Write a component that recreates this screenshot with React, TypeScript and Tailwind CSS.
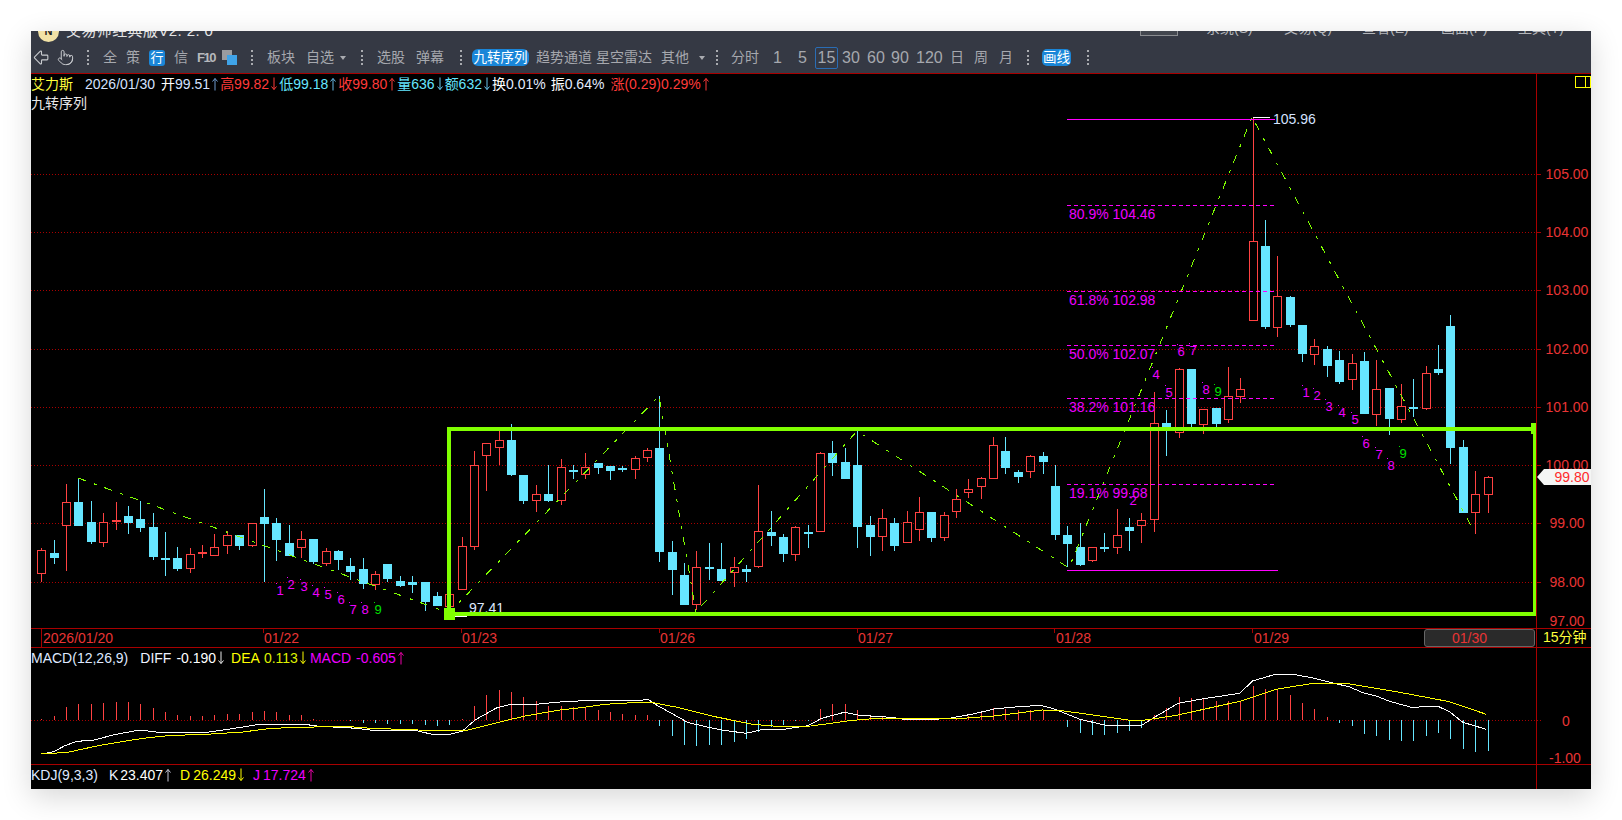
import React from 'react'
import { ArrowBigLeft, Pointer } from 'lucide-react'

const RED = '#ff4242'
const CYAN = '#66e6ff'
const GRID = '#a80000'
const AXIS = '#e83434'
const GREEN = '#80ff00'
const FIB = '#ee00ff'

type Row = number[]

// measured off the crops as [high, bodyTop, bodyBottom, low, isRed]
const scale = (oy: number, rows: Row[]) =>
    rows.map(([h, t, b, l, up]) => [oy + h / 3, oy + t / 3, oy + b / 3, oy + l / 3, up])

const candles: Row[] = [
    ...scale(420, [
        [384, 390, 458, 486, 1], [360, 399, 414, 432, 0], [192, 246, 314, 453, 1], [175, 245, 318, 318, 0],
        [243, 306, 366, 372, 0], [279, 306, 365, 381, 1], [246, 300, 302, 330, 1], [258, 288, 309, 342, 0],
        [243, 297, 324, 336, 0], [279, 321, 411, 420, 0], [336, 414, 416, 468, 0], [381, 414, 447, 453, 0],
        [384, 403, 446, 459, 1], [375, 397, 401, 414, 1], [342, 381, 405, 405, 1], [333, 346, 377, 402, 1],
        [345, 345, 378, 390, 0], [310, 310, 377, 381, 1], [207, 291, 312, 486, 0], [294, 309, 360, 423, 0],
        [315, 369, 408, 408, 0], [333, 358, 383, 414, 1], [357, 357, 426, 432, 0], [384, 393, 429, 438, 1],
        [390, 393, 420, 450, 0], [414, 438, 456, 480, 0], [414, 447, 492, 507, 0], [453, 463, 492, 510, 1],
        [432, 432, 477, 486, 0], [468, 483, 498, 501, 0], [468, 486, 495, 519, 0], [486, 486, 546, 573, 0],
        [516, 528, 558, 558, 0],
    ]),
    ...scale(380, [
        [642, 642, 678, 700, 1], [471, 499, 629, 629, 1], [213, 256, 500, 510, 1], [190, 190, 227, 333, 1],
        [153, 181, 203, 255, 1], [132, 180, 285, 288, 0], [285, 285, 363, 372, 0], [315, 343, 362, 396, 1],
        [255, 342, 363, 366, 0], [237, 262, 361, 375, 1], [255, 270, 274, 297, 0], [219, 262, 284, 297, 1],
        [249, 249, 264, 282, 0], [258, 258, 273, 300, 0], [258, 264, 267, 276, 0], [228, 235, 268, 297, 1],
        [205, 211, 233, 246, 1], [48, 204, 516, 546, 0], [483, 516, 570, 645, 0], [549, 585, 675, 675, 0],
        [513, 562, 673, 690, 1], [489, 561, 567, 600, 0], [489, 567, 603, 603, 0], [531, 562, 578, 621, 1],
        [555, 567, 576, 606, 0], [315, 454, 559, 563, 1], [393, 456, 468, 498, 0], [462, 471, 522, 546, 0],
        [438, 442, 524, 543, 1], [435, 456, 459, 504, 0], [217, 220, 455, 455, 1],
    ]),
    ...scale(400, [
        [123, 159, 189, 228, 0], [144, 186, 237, 237, 0], [85, 195, 381, 444, 0], [348, 375, 411, 468, 0],
        [327, 355, 410, 453, 1], [354, 369, 438, 453, 0], [333, 367, 428, 428, 1], [291, 337, 389, 423, 1],
        [336, 336, 414, 426, 0], [336, 346, 413, 423, 1], [267, 298, 335, 354, 1], [237, 268, 278, 294, 1],
        [231, 235, 260, 297, 1], [111, 136, 236, 236, 1], [111, 153, 204, 222, 0], [210, 216, 231, 249, 0],
        [165, 169, 215, 234, 1], [156, 168, 186, 222, 0], [195, 258, 405, 420, 0], [378, 405, 432, 502, 0],
        [369, 441, 495, 498, 0], [441, 441, 480, 486, 1], [399, 441, 443, 456, 0], [327, 406, 443, 462, 1],
        [354, 381, 393, 453, 0], [339, 361, 377, 429, 1],
    ]),
    [392, 423, 519, 532, 1], [410, 423, 427, 456, 0], [368, 369, 432, 438, 1], [369, 369, 424, 427, 0],
    [409, 409, 424, 434, 1], [408, 408, 424, 427, 0], [367, 396, 419, 423, 1], [378, 389, 396, 403, 1],
    [118, 241, 320, 320, 1], [220, 246, 327, 329, 0], [256, 296, 327, 337, 1], [296, 297, 325, 327, 0],
    [325, 325, 354, 362, 0], [339, 346, 354, 365, 1], [346, 349, 366, 377, 0], [351, 360, 382, 384, 0],
    [354, 363, 379, 390, 1], [352, 361, 414, 414, 0], [360, 389, 414, 426, 1], [388, 388, 419, 435, 0],
    [384, 406, 419, 423, 1], [379, 407, 408, 417, 0], [366, 373, 408, 410, 1], [345, 369, 373, 375, 0],
    [315, 326, 448, 464, 0], [440, 447, 513, 513, 0], [471, 494, 512, 534, 1], [476, 477, 494, 513, 1],
]

const cx = (i: number) => Math.round(41.4 + 12.36 * i)

const macdBars = [
    268, 258, 231, 222, 222, 219, 216, 216, 222, 234, 246, 255, 258, 259, 254, 252, 251, 246, 243, 246,
    255, 255, 267, 269, 270, 274, 279, 280, 282, 282, 282, 285, 288, 285, 268, 228, 195, 181, 186, 201,
    213, 228, 228, 232, 234, 240, 246, 252, 255, 255, 288, 318, 345, 348, 345, 345, 336, 327, 306, 291,
    285, 274, 272, 237, 222, 222, 240, 255, 258, 269, 270, 271, 271, 270, 264, 258, 249, 234, 237, 240,
    240, 240, 270, 291, 309, 315, 315, 309, 303, 294, 255, 234, 201, 204, 204, 213, 213, 213, 168, 177,
    180, 195, 219, 237, 261, 279, 288, 312, 318, 330, 333, 333, 318, 309, 327, 357, 366, 363,
]

// line points as they sit in the three MACD crops: [crop x, crop y]
const linePoints = (a: Row[], b: Row[], c: Row[]) =>
    [
        ...a.map(([x, y]) => [x / 2.8, y]),
        ...b.map(([x, y]) => [560 + x / 2.904, y]),
        ...c.map(([x, y]) => [1100 + x / 3.004, y]),
    ]
        .map(([x, y]) => `${x.toFixed(1)},${(630 + y / 3).toFixed(1)}`)
        .join(' ')

const diffLine = linePoints(
    [[116, 372], [150, 365], [180, 348], [215, 334], [260, 331], [320, 314], [390, 300], [445, 307], [480, 309], [520, 307], [580, 307], [650, 296], [720, 284], [770, 283], [860, 284], [895, 289], [1000, 295], [1035, 300], [1100, 300], [1170, 303], [1210, 313], [1260, 313], [1295, 303], [1330, 270], [1390, 234], [1430, 223], [1500, 223]],
    [[0, 216], [90, 211], [235, 211], [255, 208], [280, 225], [350, 265], [370, 277], [430, 292], [470, 300], [540, 310], [590, 298], [650, 298], [720, 287], [760, 265], [825, 247], [870, 256], [960, 262], [1000, 268], [1090, 268], [1130, 265], [1200, 252], [1260, 237], [1310, 232], [1395, 226], [1430, 235], [1510, 268]],
    [[0, 282], [20, 286], [125, 286], [170, 258], [235, 220], [300, 208], [420, 190], [458, 153], [530, 132], [575, 132], [640, 144], [750, 171], [790, 188], [830, 198], [870, 214], [935, 232], [1015, 229], [1050, 245], [1090, 277], [1160, 298]],
)

const deaLine = linePoints(
    [[116, 372], [190, 367], [280, 346], [400, 325], [480, 316], [560, 314], [680, 306], [760, 295], [880, 291], [965, 289], [1040, 295], [1170, 300], [1300, 303], [1380, 281], [1470, 258]],
    [[0, 240], [70, 232], [130, 223], [230, 217], [270, 218], [340, 232], [450, 260], [560, 283], [630, 289], [730, 288], [840, 272], [920, 265], [1100, 266], [1170, 265], [1260, 258], [1400, 240], [1450, 241]],
    [[0, 258], [90, 271], [130, 271], [230, 256], [420, 214], [530, 178], [640, 160], [740, 160], [900, 187], [1050, 215], [1160, 253]],
)

const gridLines = [174.5, 232.5, 290.5, 349.5, 407.5, 465.5, 523.5, 582.5]
const priceLabels: [string, number][] = [
    ['105.00', 174], ['104.00', 232], ['103.00', 290], ['102.00', 349], ['101.00', 407],
    ['100.00', 465], ['99.00', 523], ['98.00', 582], ['97.00', 621],
]
const fibLines: [number, string, number][] = [
    [205.5, '80.9% 104.46', 214], [291.5, '61.8% 102.98', 300], [345.5, '50.0% 102.07', 354],
    [398.5, '38.2% 101.16', 407], [484.5, '19.1% 99.68', 493],
]
const nineCount: [string, number, number][] = [
    ['1', 280, 590], ['2', 291, 584], ['3', 304, 586], ['4', 316, 592], ['5', 328, 594], ['6', 341, 599],
    ['7', 353, 609], ['8', 365, 609], ['9', 378, 609],
    ['2', 1133, 500], ['4', 1156, 374], ['5', 1169, 392], ['6', 1181, 351], ['7', 1193, 350], ['8', 1206, 389],
    ['9', 1218, 391],
    ['1', 1306, 392], ['2', 1317, 395], ['3', 1329, 406], ['4', 1342, 412], ['5', 1355, 419], ['6', 1366, 443],
    ['7', 1379, 454], ['8', 1391, 465], ['9', 1403, 453],
]
const dates: [string, number][] = [
    ['2026/01/20', 43], ['01/22', 264], ['01/23', 462], ['01/26', 660], ['01/27', 858], ['01/28', 1056], ['01/29', 1254],
]
const dateTicks = [263, 461, 659, 857, 1054, 1252, 1450]

function Dots() {
    return <span className="shrink-0 w-[2px] h-[15px] border-l-2 border-dotted border-[#a9abb0]" />
}

function Caret() {
    return <span className="shrink-0 w-0 h-0 border-x-[3px] border-x-transparent border-t-[4px] border-t-[#a9abb0]" />
}

function Up({ className }: { className: string }) {
    return (
        <svg className={`shrink-0 ${className}`} width="10" height="14" viewBox="0 0 10 14" fill="none" stroke="currentColor">
            <path d="M5 1.5V13.5M2.5 4.5L5 1.5L7.5 4.5" />
        </svg>
    )
}

function Down({ className }: { className: string }) {
    return (
        <svg className={`shrink-0 ${className}`} width="10" height="14" viewBox="0 0 10 14" fill="none" stroke="currentColor">
            <path d="M5 0.5V12.5M2.5 9.5L5 12.5L7.5 9.5" />
        </svg>
    )
}

function Toolbar() {
    return (
        <div className="h-[42px] shrink-0 overflow-hidden bg-[#353944] text-[#a6a8ae]">
            <div className="-mt-[10px] h-[21px] flex items-center">
                <div className="ml-[7px] w-[21px] h-[21px] rounded-full bg-[#f2e2a6] flex items-center justify-center text-[11px] font-bold text-[#222]">N</div>
                <span className="ml-[7px] text-[15px] tracking-[0.4px] text-[#e4e4e4]">交易师经典版V2. 2. 0</span>
                <div className="ml-auto flex items-center -mt-[6px] pr-[21px] text-[14px] text-[#b4b6ba]">
                    <div className="w-[38px] h-[14px] mr-[28px] border border-[#8a8c90] bg-[#43474f]" />
                    <span className="w-[52px] mr-[26px] whitespace-nowrap">系统(S)</span>
                    <span className="w-[52px] mr-[26px] whitespace-nowrap">交易(Q)</span>
                    <span className="w-[52px] mr-[27px] whitespace-nowrap">查看(E)</span>
                    <span className="w-[52px] mr-[25px] whitespace-nowrap">画面(P)</span>
                    <span className="w-[52px] whitespace-nowrap">工具(T)</span>
                </div>
            </div>
            <div className="h-[31px] flex items-center text-[14px] whitespace-nowrap">
                <ArrowBigLeft className="ml-[1px] shrink-0 w-[19px] h-[19px]" strokeWidth={1.4} color="#c9cbcf" />
                <Pointer className="ml-[6px] shrink-0 w-[17px] h-[17px]" strokeWidth={1.4} color="#c9cbcf" />
                <span className="ml-[13px] flex items-center"><Dots /></span>
                <span className="ml-[14px] w-[14px]">全</span>
                <span className="ml-[9px] w-[14px]">策</span>
                <span className="ml-[9px] w-[16px] h-[16px] rounded-[3px] bg-[#1a86d8] text-white text-[13px] leading-[16px] text-center">行</span>
                <span className="ml-[9px] w-[14px]">信</span>
                <span className="ml-[9px] w-[16px] text-[13px] font-bold tracking-[-1.4px] text-[#b6b8bc]">F10</span>
                <span className="relative ml-[9px] w-[15px] h-[15px]">
                    <span className="absolute left-0 top-0 w-[10px] h-[10px] bg-[#9a9ca0]" />
                    <span className="absolute right-0 bottom-0 w-[10px] h-[10px] bg-[#3fa3e8]" />
                </span>
                <span className="ml-[14px] flex items-center"><Dots /></span>
                <span className="ml-[14px] w-[28px]">板块</span>
                <span className="ml-[11px] w-[28px]">自选</span>
                <span className="ml-[6px] flex items-center"><Caret /></span>
                <span className="ml-[15px] flex items-center"><Dots /></span>
                <span className="ml-[14px] w-[28px]">选股</span>
                <span className="ml-[11px] w-[28px]">弹幕</span>
                <span className="ml-[16px] flex items-center"><Dots /></span>
                <span className="ml-[10px] w-[57px] h-[17px] rounded-[6px] bg-[#1a86d8] text-white text-center text-[13.5px] leading-[17px]">九转序列</span>
                <span className="ml-[7px] w-[56px]">趋势通道</span>
                <span className="ml-[4px] w-[56px]">星空雷达</span>
                <span className="ml-[9px] w-[28px]">其他</span>
                <span className="ml-[10px] flex items-center"><Caret /></span>
                <span className="ml-[11px] flex items-center"><Dots /></span>
                <span className="ml-[13px] w-[28px]">分时</span>
                <span className="ml-[14px] w-[9px] text-[16px] text-center">1</span>
                <span className="ml-[16px] w-[9px] text-[16px] text-center">5</span>
                <span className="ml-[8px] w-[23px] h-[22px] rounded-[2px] border border-[#2a6db5] text-[16px] leading-[20px] text-center">15</span>
                <span className="ml-[4px] w-[18px] text-[16px]">30</span>
                <span className="ml-[7px] w-[18px] text-[16px]">60</span>
                <span className="ml-[6px] w-[18px] text-[16px]">90</span>
                <span className="ml-[7px] w-[27px] text-[16px]">120</span>
                <span className="ml-[7px] w-[14px]">日</span>
                <span className="ml-[10px] w-[14px]">周</span>
                <span className="ml-[11px] w-[14px]">月</span>
                <span className="ml-[14px] flex items-center"><Dots /></span>
                <span className="ml-[13px] w-[29px] h-[17px] rounded-[5px] bg-[#1a86d8] text-white text-center text-[13.5px] leading-[17px]">画线</span>
                <span className="ml-[16px] flex items-center"><Dots /></span>
            </div>
        </div>
    )
}

function Quote() {
    return (
        <div className="relative flex flex-col items-start text-[14px] leading-[19px] whitespace-nowrap">
            <div className="h-[20px] flex items-center">
                <span className="w-[54px] text-[#ffff3c]">艾力斯</span>
                <span className="text-[#d4e2ff]">2026/01/30</span>
                <span className="ml-[6px] text-white">开</span>
                <span className="text-[#d4e2ff]">99.51</span>
                <Up className="text-[#6f9bd0]" />
                <span className="text-[#ff3a3a]">高99.82</span>
                <Down className="text-[#ff3a3a]" />
                <span className="text-[#66e6ff]">低99.18</span>
                <Up className="text-[#66b8e6]" />
                <span className="text-[#ff3a3a]">收99.80</span>
                <Up className="text-[#ff3a3a]" />
                <span className="text-[#66e6ff]">量636</span>
                <Down className="text-[#66c8f0]" />
                <span className="text-[#66e6ff]">额632</span>
                <Down className="text-[#66c8f0]" />
                <span className="text-white">换</span>
                <span className="text-[#e4ecff]">0.01%</span>
                <span className="ml-[5px] text-white">振</span>
                <span className="text-[#e4ecff]">0.64%</span>
                <span className="ml-[6px] text-[#ff3a3a]">涨(0.29)0.29%</span>
                <Up className="text-[#ff3a3a]" />
            </div>
            <div className="text-[#e8e8e8]">九转序列</div>
        </div>
    )
}

function MainChart() {
    return (
        <svg className="absolute inset-0 w-full h-full overflow-visible" viewBox="31 74 1505 554">
            {gridLines.map((y) => (
                <line key={y} x1={31} x2={1536} y1={y} y2={y} stroke={GRID} strokeDasharray="1 2" shapeRendering="crispEdges" />
            ))}
            {candles.map(([h, t, b, l, up], i) => {
                const c = cx(i)
                const color = up ? RED : CYAN
                return (
                    <g key={i} shapeRendering="crispEdges">
                        <line x1={c + 0.5} x2={c + 0.5} y1={h} y2={l} stroke={color} />
                        {b - t < 3 ? (
                            <rect x={c - 4} y={t} width={9} height={2} fill={color} />
                        ) : up ? (
                            <rect x={c - 3.5} y={Math.round(t) + 0.5} width={8} height={Math.round(b - t)} fill="#000" stroke={color} />
                        ) : (
                            <rect x={c - 4} y={t} width={9} height={b - t} fill={color} />
                        )}
                    </g>
                )
            })}
            <polyline
                points="78,478 449,613 659,396 696,612 857,431 1069,568 1252,117 1475,533"
                fill="none"
                stroke={GREEN}
                strokeDasharray="8 9 3 8"
                shapeRendering="crispEdges"
            />
            <line x1={1067} x2={1275} y1={119.5} y2={119.5} stroke="#ff00ff" shapeRendering="crispEdges" />
            <line x1={1253} x2={1270} y1={117.5} y2={117.5} stroke="#fff" shapeRendering="crispEdges" />
            <text x={1273} y={124} fontSize={14} fill="#d4e2ff">105.96</text>
            <line x1={1067} x2={1278} y1={570.5} y2={570.5} stroke="#ff00ff" shapeRendering="crispEdges" />
            {fibLines.map(([y, label, ty]) => (
                <g key={label}>
                    <line x1={1067} x2={1275} y1={y} y2={y} stroke="#ff00ff" strokeDasharray="4 3" shapeRendering="crispEdges" />
                    <text x={1069} y={ty + 5} fontSize={14} fill={FIB}>{label}</text>
                </g>
            ))}
            {nineCount.map(([n, x, y]) => (
                <g key={`${n}${x}`} fill={n === '9' ? '#00e000' : FIB}>
                    <rect x={x - 4} y={y - 7} width={1} height={1} shapeRendering="crispEdges" />
                    <text x={x} y={y + 5} fontSize={13} textAnchor="middle">{n}</text>
                </g>
            ))}
            <text x={469} y={613} fontSize={14} fill="#dfe8ff">97.41</text>
            <line x1={450} x2={467} y1={616.5} y2={616.5} stroke="#fff" shapeRendering="crispEdges" />
            <g shapeRendering="crispEdges">
                <rect x={449} y={429} width={1085.5} height={185} fill="none" stroke={GREEN} strokeWidth={4} />
                <rect x={444} y={608} width={11} height={12} fill={GREEN} />
                <rect x={1531} y={423} width={5} height={11} fill={GREEN} />
            </g>
        </svg>
    )
}

function PriceAxis() {
    return (
        <svg className="absolute inset-0 w-full h-full overflow-visible" viewBox="1537 74 54 554">
            {gridLines.map((y) => (
                <line key={y} x1={1537} x2={1541} y1={y} y2={y} stroke={GRID} shapeRendering="crispEdges" />
            ))}
            {priceLabels.map(([label, y]) => (
                <text key={label} x={1567} y={y + 5} fontSize={14} textAnchor="middle" fill={AXIS}>{label}</text>
            ))}
            <polygon points="1537,477 1544,469 1591,469 1591,485 1544,485" fill="#f4f5f4" />
            <text x={1572} y={482} fontSize={14} textAnchor="middle" fill="#ff2a2a">99.80</text>
        </svg>
    )
}

function TimeAxis() {
    return (
        <div className="h-[19px] shrink-0 flex border-b border-[#a80000]">
            <div className="relative flex-1">
                <svg className="absolute inset-0 w-full h-full" viewBox="31 629 1505 18">
                    <line x1={41.5} x2={41.5} y1={629} y2={647} stroke={GRID} shapeRendering="crispEdges" />
                    {dateTicks.map((x) => (
                        <line key={x} x1={x + 0.5} x2={x + 0.5} y1={629} y2={633} stroke={GRID} shapeRendering="crispEdges" />
                    ))}
                    {dates.map(([label, x]) => (
                        <text key={label} x={x} y={643} fontSize={14} fill={AXIS}>{label}</text>
                    ))}
                </svg>
                <div className="absolute right-[1px] top-0 w-[111px] h-[18px] rounded-[3px] border border-[#666] bg-[#2a2a2a] pl-[27px] text-[14px] leading-[17px] text-[#e83434]">01/30</div>
            </div>
            <div className="w-[55px] shrink-0 border-l border-[#a80000] pl-[6px] text-[14px] leading-[17px] text-[#ffff3c] whitespace-nowrap">15分钟</div>
        </div>
    )
}

function MacdPane() {
    return (
        <div className="h-[117px] shrink-0 flex border-b border-[#a80000]">
            <div className="relative flex-1">
                <svg className="absolute inset-0 w-full h-full overflow-visible" viewBox="31 648 1505 116">
                    <line x1={31} x2={1541} y1={720.5} y2={720.5} stroke={GRID} strokeDasharray="1 2" shapeRendering="crispEdges" />
                    {macdBars.map((v, i) => (
                        <line
                            key={i}
                            x1={cx(i) + 0.5}
                            x2={cx(i) + 0.5}
                            y1={720}
                            y2={630 + v / 3}
                            stroke={v > 271 ? CYAN : RED}
                            shapeRendering="crispEdges"
                        />
                    ))}
                    <polyline points={diffLine} fill="none" stroke="#fff" shapeRendering="crispEdges" />
                    <polyline points={deaLine} fill="none" stroke="#ffff00" shapeRendering="crispEdges" />
                </svg>
                <div className="relative h-[20px] flex items-center text-[14px] whitespace-nowrap">
                    <span className="text-[#dfe8ff]">MACD(12,26,9)</span>
                    <span className="ml-[12px] text-[#eef2ff]">DIFF</span>
                    <span className="ml-[5px] text-white">-0.190</span>
                    <Down className="text-[#e8e8e8]" />
                    <span className="ml-[5px] text-[#ffff00]">DEA</span>
                    <span className="ml-[4px] text-[#ddf000]">0.113</span>
                    <Down className="text-[#ffff00]" />
                    <span className="ml-[2px] text-[#ee00ff]">MACD</span>
                    <span className="ml-[5px] text-[#ee00ff]">-0.605</span>
                    <Up className="text-[#ee00aa]" />
                </div>
            </div>
            <div className="relative w-[55px] shrink-0 border-l border-[#a80000] text-[14px] text-[#e83434]">
                <span className="absolute left-[25px] top-[63px]">0</span>
                <span className="absolute left-[12px] top-[100px]">-1.00</span>
            </div>
        </div>
    )
}

function KdjPane() {
    return (
        <div className="flex-1 flex">
            <div className="flex-1 h-[20px] flex items-center text-[14px] whitespace-nowrap">
                <span className="text-[#dfe8ff]">KDJ(9,3,3)</span>
                <span className="ml-[11px] text-[#eef2ff]">K</span>
                <span className="ml-[2px] text-white">23.407</span>
                <Up className="text-[#c8c8d8]" />
                <span className="ml-[7px] text-[#ffff00]">D</span>
                <span className="ml-[3px] text-[#ffff00]">26.249</span>
                <Down className="text-[#ffff00]" />
                <span className="ml-[7px] text-[#ee00ff]">J</span>
                <span className="ml-[3px] text-[#ee00ff]">17.724</span>
                <Up className="text-[#ee00aa]" />
            </div>
            <div className="w-[55px] shrink-0 border-l border-[#a80000]" />
        </div>
    )
}

export default function App() {
    return (
        <div className="w-[1622px] h-[820px] overflow-hidden bg-white pl-[31px] pt-[31px] font-['Liberation_Sans','Noto_Sans_CJK_SC',sans-serif]">
            <div className="w-[1560px] h-[758px] flex flex-col bg-black shadow-[0_8px_28px_rgba(0,0,0,0.16)]">
                <Toolbar />
                <div className="h-[1px] shrink-0 bg-[#a80000]" />
                <div className="h-[555px] shrink-0 flex border-b border-[#a80000]">
                    <div className="relative flex-1">
                        <MainChart />
                        <Quote />
                    </div>
                    <div className="relative w-[55px] shrink-0 border-l border-[#a80000]">
                        <PriceAxis />
                        <div className="absolute left-[38px] top-[2px] w-[16px] h-[12px] border border-[#ffff00] flex justify-end">
                            <span className="w-[5px] h-full border-l border-[#ffff00]" />
                        </div>
                    </div>
                </div>
                <TimeAxis />
                <MacdPane />
                <KdjPane />
            </div>
        </div>
    )
}
